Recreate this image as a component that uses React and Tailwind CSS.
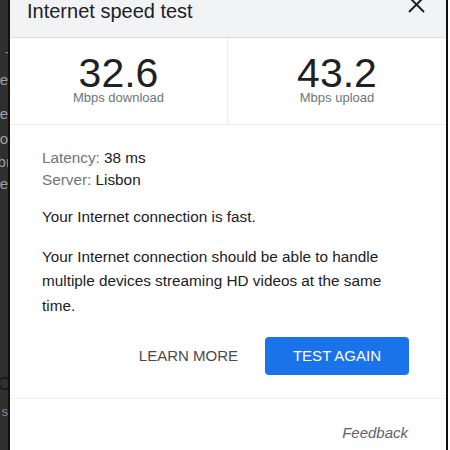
import React from "react";

export default function App() {
  const font = { fontFamily: '"Liberation Sans", Arial, sans-serif' };
  return (
    <div className="flex h-[450px] w-[450px] overflow-hidden bg-white" style={font}>
      {/* background page strip */}
      <div className="relative h-full w-[8px] overflow-hidden bg-[#2f2f2f] text-[15px] leading-none">
        <div className="absolute right-[-2px] top-[44px] text-[#8c8c8c]">-</div>
        <div className="absolute right-[0px] top-[72px] text-[#a0a0a0]">ne</div>
        <div className="absolute right-[0px] top-[106px] text-[#a0a0a0]">ne</div>
        <div className="absolute right-[0px] top-[131px] text-[#a0a0a0]">o</div>
        <div className="absolute right-[-2px] top-[154px] text-[#a0a0a0]">bı</div>
        <div className="absolute right-[0px] top-[176px] text-[#a0a0a0]">e</div>
        <div className="absolute right-[-3px] top-[374px] text-[19px] text-[#151520]">C</div>
        <div className="absolute right-[0px] top-[405px] text-[13px] text-[#8c8c8c]">s</div>
      </div>
      <div className="h-full w-[2px] bg-[#111]" />

      {/* dialog */}
      <div className="flex h-full w-[436px] flex-col bg-white">
        {/* header */}
        <div className="flex h-[38px] shrink-0 items-start justify-between border-b border-[#dcdcdc] bg-[#f1f3f4] pl-[17px] pr-[21px]">
          <div className="mt-[-1px] text-[20px] leading-[24px] text-[#202124]">Internet speed test</div>
          <svg width="17" height="17" viewBox="0 0 17 17" className="mt-[-4px]" fill="none" stroke="#202124" strokeWidth="2">
            <path d="M1 1L16 16M16 1L1 16" />
          </svg>
        </div>

        {/* stats */}
        <div className="grid h-[87px] shrink-0 grid-cols-2 border-b border-[#ececec]">
          <div className="flex flex-col items-center border-r border-[#ececec] pt-[16px]">
            <div className="text-[41px] leading-[38px] text-[#202124]">32.6</div>
            <div className="text-[13px] leading-[12px] text-[#70757a]">Mbps download</div>
          </div>
          <div className="flex flex-col items-center pt-[16px]">
            <div className="text-[41px] leading-[38px] text-[#202124]">43.2</div>
            <div className="text-[13px] leading-[12px] text-[#70757a]">Mbps upload</div>
          </div>
        </div>

        {/* body */}
        <div className="flex flex-col px-[32px] pt-[22px] text-[15.3px] text-[#202124]">
          <div className="leading-[22px]">
            <span className="text-[#70757a]">Latency:</span> 38 ms
          </div>
          <div className="leading-[22px]">
            <span className="text-[#70757a]">Server:</span> Lisbon
          </div>
          <p className="mt-[14px] leading-[24px]">Your Internet connection is fast.</p>
          <p className="mt-[16px] leading-[24.3px]">
            Your Internet connection should be able to handle multiple devices streaming HD videos at the same time.
          </p>
        </div>

        {/* actions */}
        <div className="mt-[19px] flex items-center justify-end gap-[27px] pr-[37px]">
          <div className="text-[15px] text-[#4a4a4a]">LEARN MORE</div>
          <div className="flex h-[38px] w-[144px] items-center justify-center rounded-[4px] bg-[#1a73e8] text-[15px] text-white">
            TEST AGAIN
          </div>
        </div>

        <div className="mt-[23px] border-t border-[#f0f0f0]" />

        <div className="mt-[23px] flex justify-end pr-[38px]">
          <div className="text-[15px] italic leading-[22px] text-[#5f6368]">Feedback</div>
        </div>
      </div>

      <div className="h-full w-[2px] bg-[#111]" />
      <div className="h-full w-[2px] bg-white" />
    </div>
  );
}
